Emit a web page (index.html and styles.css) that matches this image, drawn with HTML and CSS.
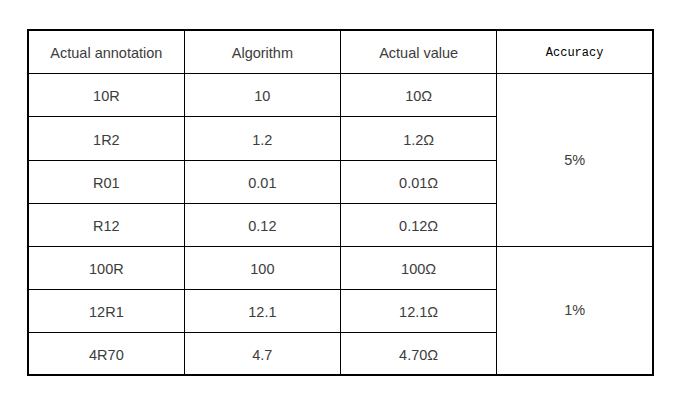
FILE: index.html
```html
<!DOCTYPE html>
<html>
<head>
<meta charset="utf-8">
<link rel="stylesheet" href="styles.css">
</head>
<body>
<table class="tbl">
  <tr class="head">
    <td>Actual annotation</td>
    <td>Algorithm</td>
    <td>Actual value</td>
    <td class="mono">Accuracy</td>
  </tr>
  <tr><td>10R</td><td>10</td><td>10Ω</td><td rowspan="4" class="acc">5%</td></tr>
  <tr class="tall"><td>1R2</td><td>1.2</td><td>1.2Ω</td></tr>
  <tr><td>R01</td><td>0.01</td><td>0.01Ω</td></tr>
  <tr><td>R12</td><td>0.12</td><td>0.12Ω</td></tr>
  <tr><td>100R</td><td>100</td><td>100Ω</td><td rowspan="3" class="acc">1%</td></tr>
  <tr><td>12R1</td><td>12.1</td><td>12.1Ω</td></tr>
  <tr><td>4R70</td><td>4.7</td><td>4.70Ω</td></tr>
</table>
</body>
</html>
```

FILE: styles.css
```css
html, body {
  margin: 0;
  background: #fff;
}
body {
  padding: 29px 0 0 27px;
}
.tbl {
  border-collapse: collapse;
  border: 2px solid #000;
  font-family: "Liberation Sans", Arial, sans-serif;
  font-size: 14.5px;
  color: #3c3c3c;
  table-layout: fixed;
  width: 627px;
}
.tbl td {
  border: 1px solid #000;
  text-align: center;
  vertical-align: middle;
  height: 43px;
  padding: 3px 0 0 0;
  box-sizing: border-box;
  width: 156px;
}
.tbl tr.tall td {
  height: 44px;
}
.tbl .mono {
  font-family: "Liberation Mono", "DejaVu Sans Mono", monospace;
  font-size: 12px;
  color: #000;
}
.tbl td.acc {
  padding-top: 0;
}
```
